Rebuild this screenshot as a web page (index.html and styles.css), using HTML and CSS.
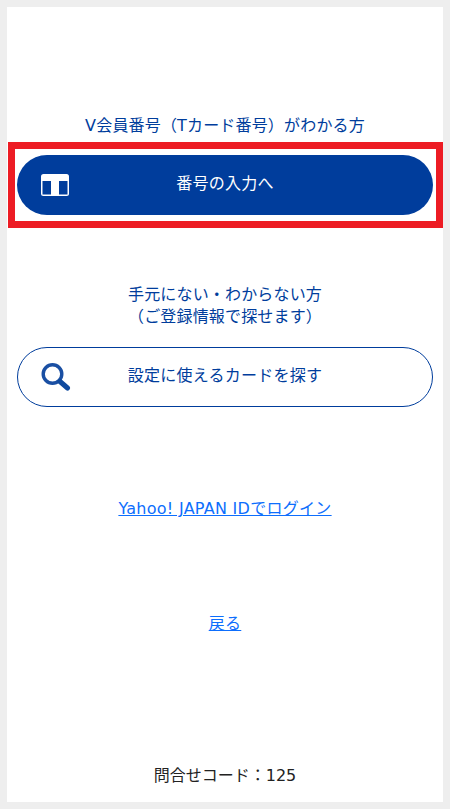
FILE: index.html
```html
<!DOCTYPE html>
<html lang="ja">
<head>
<meta charset="utf-8">
<title>番号の入力</title>
<link rel="stylesheet" href="styles.css">
</head>
<body>
<main class="card">
  <p class="lead lead-first">V会員番号（Tカード番号）がわかる方</p>
  <div class="highlight">
    <a class="btn btn-primary" href="#">
      <svg class="btn-icon" width="28" height="22" viewBox="0 0 28 22" aria-hidden="true">
        <rect x="0" y="0" width="28" height="22" rx="2.5" fill="#fff"/>
        <rect x="1.5" y="7" width="8.5" height="13.5" fill="#003d9c"/>
        <rect x="18" y="7" width="8.5" height="13.5" fill="#003d9c"/>
      </svg>
      <span>番号の入力へ</span>
    </a>
  </div>
  <p class="lead lead-second">手元にない・わからない方<br>（ご登録情報で探せます）</p>
  <a class="btn btn-outline" href="#">
    <svg class="btn-icon" width="30" height="30" viewBox="0 0 30 30" aria-hidden="true">
      <circle cx="11.5" cy="13" r="9.3" fill="none" stroke="#1a4fa3" stroke-width="3.4"/>
      <path d="M19 20.5 L26.5 27" stroke="#0f4a9e" stroke-width="5" stroke-linecap="round"/>
    </svg>
    <span>設定に使えるカードを探す</span>
  </a>
  <p class="link-row link-yahoo"><a href="#">Yahoo! JAPAN IDでログイン</a></p>
  <p class="link-row link-back"><a href="#">戻る</a></p>
  <p class="code">問合せコード：125</p>
</main>
</body>
</html>
```

FILE: styles.css
```css
* { box-sizing: border-box; }
html, body { height: 100%; }
body {
  margin: 0;
  padding: 7px;
  background: #eeeeee;
  font-family: "DejaVu Sans", "Noto Sans CJK JP", sans-serif;
  font-size: 16px;
  font-weight: 400;
  line-height: 24px;
}
.card {
  height: 795px;
  background: #fff;
  text-align: center;
  overflow: hidden;
  padding-top: 107px;
}
.lead { margin: 0; color: #003d9c; letter-spacing: 0.17px; }
.highlight {
  margin: 4px 0 0 1px;
  height: 86px;
  border: 7px solid #ed1c24;
  padding: 6px 3px 6px 2px;
}
.btn {
  position: relative;
  display: flex;
  align-items: center;
  justify-content: center;
  height: 60px;
  padding-bottom: 3px;
  border-radius: 30px;
  text-decoration: none;
  letter-spacing: 0.25px;
}
.btn-icon { position: absolute; }
.btn-primary { background: #003d9c; color: #fff; }
.btn-primary .btn-icon { left: 24px; top: 19px; }
.lead-second { margin-top: 56px; line-height: 22px; }
.btn-outline {
  margin: 19px 10px 0;
  border: 1px solid #003d9c;
  color: #003d9c;
}
.btn-outline .btn-icon { left: 23px; top: 13px; }
.link-row { margin: 0; }
.link-row a { color: #0d6efd; letter-spacing: 0.28px; }
.link-yahoo { margin-top: 90px; }
.link-back { margin-top: 91px; }
.code { margin: 128px 0 0; color: #222; }
```
